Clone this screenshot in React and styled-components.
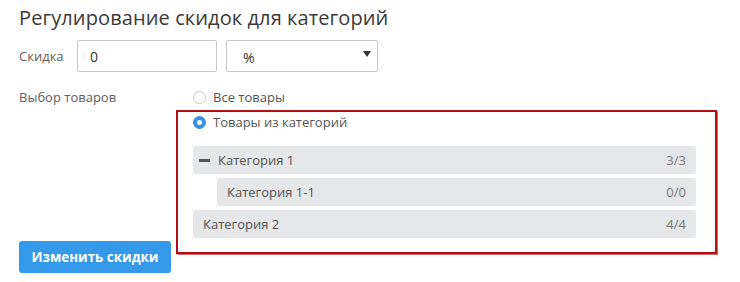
import React from "react";
import styled, { createGlobalStyle } from "styled-components";

const Global = createGlobalStyle`
  html, body { margin: 0; padding: 0; background: #fff; }
  body { font-family: "Open Sans", "Liberation Sans", sans-serif; color: #555; }
  * { box-sizing: border-box; }
`;

const Page = styled.div`
  padding: 4px 19px 0 19px;
  width: 740px;
`;

const Title = styled.h1`
  margin: 0;
  font-size: 20px;
  line-height: 27px;
  font-weight: 400;
  color: #3a3a3a;
  letter-spacing: 0.1px;
`;

const FieldRow = styled.div`
  display: flex;
  align-items: center;
  margin-top: 9px;
`;

const Label = styled.div`
  font-size: 13px;
  line-height: 20px;
  color: #606060;
  width: ${(p) => p.$w}px;
  flex: none;
`;

const TextInput = styled.div`
  width: 140px;
  height: 32px;
  border: 1px solid #c8c8c8;
  border-radius: 2px;
  padding: 0 12px;
  display: flex;
  align-items: center;
  font-size: 14px;
  color: #333;
`;

const Select = styled.div`
  margin-left: 9px;
  width: 152px;
  height: 32px;
  border: 1px solid #c8c8c8;
  border-radius: 2px;
  padding: 3px 6px 0 16px;
  display: flex;
  align-items: center;
  justify-content: space-between;
  font-size: 14px;
  color: #333;
`;

const Arrow = styled.span`
  width: 0;
  height: 0;
  border-left: 4px solid transparent;
  border-right: 4px solid transparent;
  border-top: 6px solid #333;
  margin-top: -7px;
`;

const ChoiceRow = styled.div`
  display: flex;
  margin-top: 15px;
`;

const Options = styled.div`
  display: flex;
  flex-direction: column;
  width: 503px;
`;

const Radio = styled.div`
  display: flex;
  align-items: center;
  gap: 7px;
  font-size: 13px;
  line-height: 20px;
  color: #555;
`;

const Dot = styled.span`
  width: 13px;
  height: 13px;
  border-radius: 50%;
  flex: none;
  border: ${(p) => (p.$on ? "4px solid #3592e6" : "1px solid #c9c9c9")};
  background: #fff;
`;

const Highlighted = styled.div`
  position: relative;
  margin-top: 5px;
`;

const Annotation = styled.div`
  position: absolute;
  top: -2px;
  left: -17px;
  right: -21px;
  bottom: -16px;
  border: 2px solid #b50d14;
  box-shadow: 0 0 1px 0.5px rgba(170, 10, 15, 0.6);
  pointer-events: none;
`;

const Tree = styled.div`
  display: flex;
  flex-direction: column;
  gap: 4px;
  margin-top: 14px;
`;

const TreeRow = styled.div`
  height: 28px;
  margin-left: ${(p) => p.$indent}px;
  background: #e6e7e8;
  border-radius: 3px;
  display: flex;
  align-items: center;
  padding: 0 10px;
  font-size: 13px;
  color: #555;
`;

const Toggle = styled.span`
  width: 11px;
  height: 3px;
  background: #555;
  margin-left: -4px;
  margin-right: 8px;
  flex: none;
`;

const Name = styled.span`
  flex: 1;
`;

const Count = styled.span`
  color: #777;
`;

const Button = styled.button`
  margin-top: 3px;
  width: 152px;
  height: 32px;
  padding: 0;
  border: none;
  border-radius: 3px;
  background: #3399e8;
  color: #fff;
  font-family: "Open Sans", "Liberation Sans", sans-serif;
  font-weight: 700;
  font-size: 13.4px;
  cursor: pointer;
`;

const categories = [
  { name: "Категория 1", count: "3/3", indent: 0, open: true },
  { name: "Категория 1-1", count: "0/0", indent: 24 },
  { name: "Категория 2", count: "4/4", indent: 0 },
];

export default function App() {
  return (
    <>
      <Global />
      <Page>
        <Title>Регулирование скидок для категорий</Title>
        <FieldRow>
          <Label $w={58}>Скидка</Label>
          <TextInput>0</TextInput>
          <Select>
            <span>%</span>
            <Arrow />
          </Select>
        </FieldRow>
        <ChoiceRow>
          <Label $w={174}>Выбор товаров</Label>
          <Options>
            <Radio>
              <Dot />
              Все товары
            </Radio>
            <Highlighted>
              <Annotation />
              <Radio>
                <Dot $on />
                Товары из категорий
              </Radio>
              <Tree>
                {categories.map((c) => (
                  <TreeRow key={c.name} $indent={c.indent}>
                    {c.open && <Toggle />}
                    <Name>{c.name}</Name>
                    <Count>{c.count}</Count>
                  </TreeRow>
                ))}
              </Tree>
            </Highlighted>
          </Options>
        </ChoiceRow>
        <Button>Изменить скидки</Button>
      </Page>
    </>
  );
}
